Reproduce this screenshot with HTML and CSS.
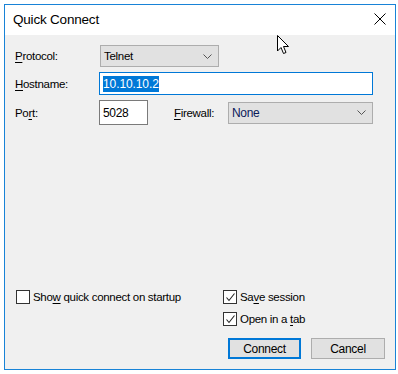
FILE: index.html
```html
<!DOCTYPE html>
<html lang="en">
	<head>
		<meta charset="UTF-8" />
		<meta name="viewport" content="width=device-width, initial-scale=1.0" />
		<link rel="stylesheet" href="styles.css">
	</head>
	<body>
		<div class="window">
			<!-- Title bar -->
			<div class="titlebar">
				<span class="title">Quick Connect</span>
				<svg class="close" width="12" height="12" viewBox="0 0 12 12">
					<path d="M0.5 0.5 L11.5 11.5 M11.5 0.5 L0.5 11.5" stroke="#000" stroke-width="1" fill="none" />
				</svg>
			</div>

			<!-- Dialog content -->
			<div class="content">
				<div class="row row-protocol">
					<span class="label"><u>P</u>rotocol:</span>
					<div class="select select-protocol">
						<span>Telnet</span>
						<svg class="chevron" width="9" height="5" viewBox="0 0 9 5"><path d="M0.5 0.5 L4.5 4.5 L8.5 0.5" stroke="#555" fill="none" /></svg>
					</div>
				</div>
				<div class="row row-host">
					<span class="label"><u>H</u>ostname:</span>
					<div class="input input-host"><span class="selected">10.10.10.2</span></div>
				</div>
				<div class="row row-port">
					<span class="label">Po<u>r</u>t:</span>
					<div class="input input-port">5028</div>
					<span class="label label-firewall"><u>F</u>irewall:</span>
					<div class="select select-firewall">
						<span class="value-none">None</span>
						<svg class="chevron" width="9" height="5" viewBox="0 0 9 5"><path d="M0.5 0.5 L4.5 4.5 L8.5 0.5" stroke="#555" fill="none" /></svg>
					</div>
				</div>

				<div class="bottom">
					<div class="col-left">
						<div class="check">
							<span class="box"></span>
							<span>Sho<u>w</u> quick connect on startup</span>
						</div>
					</div>
					<div class="col-right">
						<div class="check">
							<span class="box"><svg width="11" height="11" viewBox="0 0 11 11"><path d="M1.5 5.5 L4 8.5 L9.5 1.5" stroke="#222" stroke-width="1.1" fill="none" /></svg></span>
							<span>Sa<u>v</u>e session</span>
						</div>
						<div class="check check-tab">
							<span class="box"><svg width="11" height="11" viewBox="0 0 11 11"><path d="M1.5 5.5 L4 8.5 L9.5 1.5" stroke="#222" stroke-width="1.1" fill="none" /></svg></span>
							<span>Open in a <u>t</u>ab</span>
						</div>
						<div class="buttons">
							<div class="button button-default">Connect</div>
							<div class="button">Cancel</div>
						</div>
					</div>
				</div>
			</div>

			<!-- Mouse pointer over the dialog -->
			<svg class="cursor" width="13" height="20" viewBox="0 0 13 20">
				<path d="M0.5 0.5 L0.5 16 L4 12.5 L6.5 18.5 L9 17.5 L6.5 11.5 L11.5 11.5 Z" fill="#fff" stroke="#000" stroke-width="1" />
			</svg>
		</div>
	</body>
</html>
```

FILE: styles.css
```css
body {
	margin: 0;
	padding: 4px;
	background: #ffffff;
	font-family: "Liberation Sans", Arial, sans-serif;
	font-size: 11.5px;
	letter-spacing: -0.3px;
	color: #000000;
}

.window {
	position: relative;
	width: 390px;
	height: 364px;
	border: 1px solid #1883d7;
	display: flex;
	flex-direction: column;
	background: #f0f0f0;
}

.titlebar {
	height: 30px;
	background: #ffffff;
	display: flex;
	align-items: center;
	justify-content: space-between;
	padding: 0 8px 0 8px;
}

.title {
	font-size: 13.5px;
	letter-spacing: -0.2px;
	margin-top: -1px;
}

.close {
	margin-top: -2px;
	margin-right: 1px;
}

.content {
	flex: 1;
	display: flex;
	flex-direction: column;
	padding: 10px 10px 10px 10px;
}

.row {
	display: flex;
	align-items: center;
}

.label {
	width: 84px;
	flex-shrink: 0;
}

u {
	text-decoration-thickness: 1px;
	text-underline-offset: 2px;
}

.select {
	box-sizing: border-box;
	height: 22px;
	background: #e1e1e1;
	border: 1px solid #adadad;
	display: flex;
	align-items: center;
	justify-content: space-between;
	padding: 0 6px 0 3px;
}

.select-protocol {
	width: 119px;
	margin-left: 1px;
}

.row-host {
	margin-top: 5px;
}

.input {
	box-sizing: border-box;
	background: #ffffff;
	border: 1px solid #7a7a7a;
	display: flex;
	align-items: center;
	padding: 0 3px;
}

.input-host {
	width: 274px;
	height: 23px;
	border-color: #0078d7;
}

.selected {
	background: #0078d7;
	color: #ffffff;
	line-height: 16px;
	letter-spacing: -0.1px;
	font-size: 12px;
}

.row-port {
	margin-top: 5px;
}

.input-port {
	width: 49px;
	height: 25px;
	font-size: 12px;
}

.label-firewall {
	width: 54px;
	margin-left: 26px;
}

.select-firewall {
	width: 145px;
	height: 22px;
	font-size: 12px;
}

.value-none {
	color: #0a1a5a;
}

.bottom {
	margin-top: auto;
	display: grid;
	grid-template-columns: 208px 1fr;
}

.col-left {
	padding-left: 1px;
}

.check {
	display: flex;
	align-items: center;
	gap: 3px;
	height: 14px;
}

.box {
	box-sizing: border-box;
	width: 14px;
	height: 14px;
	border: 1px solid #333333;
	background: #ffffff;
	display: flex;
	align-items: center;
	justify-content: center;
}

.check-tab {
	margin-top: 8px;
}

.buttons {
	display: flex;
	gap: 10px;
	margin-top: 12px;
	margin-left: 5px;
}

.button {
	box-sizing: border-box;
	width: 74px;
	height: 21px;
	background: #e1e1e1;
	border: 1px solid #adadad;
	display: flex;
	align-items: center;
	justify-content: center;
	font-size: 12px;
}

.button-default {
	width: 73px;
	border: 2px solid #0078d7;
}

.cursor {
	position: absolute;
	left: 272px;
	top: 30px;
}
```
